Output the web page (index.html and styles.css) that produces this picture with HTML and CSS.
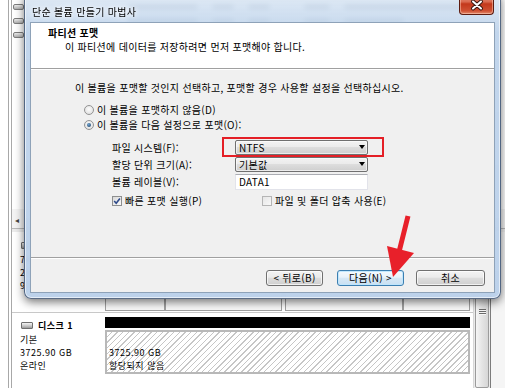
FILE: index.html
```html
<!DOCTYPE html>
<html lang="ko">

<head>
    <meta charset="utf-8">
    <title>단순 볼륨 만들기 마법사</title>
    <link rel="stylesheet" href="styles.css">
</head>

<body>
    <div class="screen">
        <!-- volume list (mostly under the wizard, only seen blurred through the glass) -->
        <div class="volumes">
            <div class="vol-row"><span class="drive"></span><span class="smudge w1"></span><span class="smudge w2"></span><span class="smudge w2"></span><span class="smudge w3"></span><span class="smudge w4"></span></div>
            <div class="vol-row"><span class="drive"></span><span class="smudge w1"></span><span class="smudge w2"></span><span class="smudge w2"></span><span class="smudge w3"></span><span class="smudge w5"></span></div>
            <div class="vol-row"><span class="drive"></span></div>
        </div>
        <div class="hscroll"><span class="scroll-left">◂</span></div>
        <div class="splitter"></div>

        <div class="lower">
            <div class="disks">
                <div class="disk disk0">
                    <div class="disk-info">
                        <div class="disk-name"><span class="hdd"></span></div>
                        <div>74.53 GB</div>
                        <div>232.88 GB</div>
                        <div>931.51 GB</div>
                    </div>
                    <div class="disk-parts">
                        <div class="bar-black"></div>
                        <div class="parts">
                            <div class="part p1"></div>
                            <div class="part p2"></div>
                            <div class="part p3"></div>
                            <div class="part p4"></div>
                        </div>
                    </div>
                </div>
                <div class="disk-gap"></div>
                <div class="disk disk1">
                    <div class="disk-info">
                        <div class="disk-name"><span class="hdd"></span><b>디스크 1</b></div>
                        <div>기본</div>
                        <div>3725.90 GB</div>
                        <div>온라인</div>
                    </div>
                    <div class="disk-parts">
                        <div class="bar-black"></div>
                        <div class="unalloc">
                            <div>3725.90 GB</div>
                            <div>할당되지 않음</div>
                        </div>
                    </div>
                </div>
            </div>
            <div class="vscroll">
                <div class="thumb"><span class="grip"></span></div>
            </div>
            <div class="edge"></div>
        </div>

        <!-- the wizard window -->
        <div class="wizard">
            <div class="titlebar">
                <h1>단순 볼륨 만들기 마법사</h1>
                <div class="close">
                    <svg width="35" height="22" viewBox="0 0 35 22">
                        <path d="M14 9.5 L22 16.5 M22 9.5 L14 16.5" stroke="#3a1710" stroke-width="4" stroke-linecap="round"/>
                        <path d="M14 9.5 L22 16.5 M22 9.5 L14 16.5" stroke="#fff" stroke-width="2" stroke-linecap="round"/>
                    </svg>
                </div>
            </div>
            <div class="client">
                <div class="wiz-head">
                    <h2>파티션 포맷</h2>
                    <p>이 파티션에 데이터를 저장하려면 먼저 포맷해야 합니다.</p>
                </div>
                <div class="wiz-body">
                    <p>이 볼륨을 포맷할 것인지 선택하고, 포맷할 경우 사용할 설정을 선택하십시오.</p>
                    <div class="radios">
                        <div class="radio"><span class="dot"></span>이 볼륨을 포맷하지 않음(D)</div>
                        <div class="radio"><span class="dot checked"></span>이 볼륨을 다음 설정으로 포맷(O):</div>
                    </div>
                    <div class="form">
                        <label>파일 시스템(F):</label>
                        <div class="combo marked">NTFS</div>
                        <label>할당 단위 크기(A):</label>
                        <div class="combo">기본값</div>
                        <label>볼륨 레이블(V):</label>
                        <div class="field">DATA1</div>
                    </div>
                    <div class="checks">
                        <div class="check quick">
                            <span class="box">
                                <svg width="8" height="8" viewBox="0 0 8 8"><path d="M1.2 4 L3.2 6.2 L6.9 1.4" fill="none" stroke="#2f4a8a" stroke-width="1.6"/></svg>
                            </span>빠른 포맷 실행(P)
                        </div>
                        <div class="check"><span class="box off"></span>파일 및 폴더 압축 사용(E)</div>
                    </div>
                </div>
                <div class="wiz-foot">
                    <button class="btn btn-back">&lt; 뒤로(B)</button>
                    <button class="btn btn-next">다음(N) &gt;</button>
                    <button class="btn btn-cancel">취소</button>
                </div>
            </div>
        </div>

        <!-- annotation arrow -->
        <svg class="pointer" width="505" height="388" viewBox="0 0 505 388">
            <line x1="408" y1="216" x2="399" y2="252" stroke="#e8202a" stroke-width="5"/>
            <polygon points="387,246 414,253 393,277" fill="#e8202a"/>
        </svg>
    </div>
</body>

</html>
```

FILE: styles.css
```css
* {
    box-sizing: border-box;
    margin: 0;
    padding: 0;
}

body {
    width: 505px;
    height: 388px;
    overflow: hidden;
    background: #fff;
    font-family: "Noto Sans CJK KR", "Noto Sans", sans-serif;
    font-size: 10px;
    letter-spacing: 0.3px;
    color: #000;
}

.screen {
    position: relative;
    width: 505px;
    height: 388px;
    padding-left: 12px;
    display: flex;
    flex-direction: column;
    background: linear-gradient(to right, #fff 8px, #a8a8a8 8px 9px, #fff 9px 11px, #a8a8a8 11px 12px, #fff 12px);
}

/* background: disk management */

.volumes {
    height: 210px;
}

.vol-row {
    display: flex;
    align-items: center;
    gap: 14px;
    height: 14px;
}

.drive {
    width: 11px;
    height: 6px;
    margin-left: 1px;
    border: 1px solid #7d7d7d;
    border-radius: 2px;
    background: linear-gradient(#eee, #b0b0b0);
}

.smudge {
    height: 4px;
    border-radius: 2px;
    background: #8d96a3;
    filter: blur(1.5px);
}

.smudge.w1 { width: 70px; margin-left: 90px; }
.smudge.w2 { width: 22px; }
.smudge.w3 { width: 26px; margin-left: 20px; }
.smudge.w4 { width: 120px; }
.smudge.w5 { width: 60px; }

.hscroll {
    height: 20px;
    background: #f4f4f4;
    border-bottom: 1px solid #b9b9b9;
    padding-left: 3px;
    font-size: 8px;
    line-height: 21px;
    color: #444;
}

.splitter {
    height: 3px;
    background: #ececec;
}

.lower {
    flex: 1;
    display: flex;
}

.disks {
    width: 461px;
    display: flex;
    flex-direction: column;
}

.disk {
    display: flex;
}

.disk0 {
    height: 80px;
}

.disk-gap {
    height: 3px;
    border-top: 1px solid #c9c9c9;
}

.disk-info {
    width: 93px;
    padding: 7px 0 0 8px;
    font-size: 9px;
    letter-spacing: 0.5px;
    line-height: 13px;
    white-space: nowrap;
}

.disk1 .disk-info {
    padding-top: 4px;
}

.disk-name {
    display: flex;
    align-items: center;
    gap: 5px;
    height: 13px;
    margin-bottom: 1px;
}

.hdd {
    width: 12px;
    height: 7px;
    margin-left: 1px;
    border: 1px solid #6f6f6f;
    border-radius: 1px;
    background: linear-gradient(#f4f4f4, #c4c4c4 60%, #9a9a9a);
}

.disk-parts {
    flex: 1;
    padding: 2px 3px 0 0;
    display: flex;
    flex-direction: column;
}

.bar-black {
    height: 11px;
    background: #000;
}

.parts {
    flex: 1;
    display: flex;
    margin: 2px 0 1px;
}

.part {
    border: 1px solid #a0a0a0;
    border-top: 0 none;
    background: #fafafa;
}

.p1 { width: 60px; }
.p2 { width: 117px; margin-right: 3px; }
.p3 { width: 118px; }
.p4 { flex: 1; }

.unalloc {
    flex: 1;
    margin-top: 2px;
    border: 2px solid #b8b8b8;
    padding: 14px 0 0 2px;
    font-size: 9px;
    letter-spacing: 0.5px;
    line-height: 13px;
    background: repeating-linear-gradient(135deg, #fff 0 3px, #c6c6c6 3px 4px);
}

.vscroll {
    width: 17px;
    background: #ebebeb;
    border-left: 1px solid #d8d8d8;
    padding: 6px 1px 0;
}

.vscroll .thumb {
    height: 150px;
    border: 1px solid #9b9b9b;
    border-radius: 2px;
    background: linear-gradient(to right, #f6f6f6, #e4e4e4 50%, #d6d6d6);
    display: flex;
    justify-content: center;
    padding-top: 70px;
}

.grip {
    width: 7px;
    height: 6px;
    background: repeating-linear-gradient(#6a6a6a 0 1px, #f5f5f5 1px 2px);
}

.edge {
    flex: 1;
    border-left: 1px solid #7c7c7c;
    background: #f5f5f5;
}

/* wizard window */

.wizard {
    position: absolute;
    left: 24px;
    top: -8px;
    width: 477px;
    height: 307px;
    padding: 0 5px 5px;
    border: 1px solid rgba(45, 65, 95, 0.75);
    border-radius: 7px;
    background: linear-gradient(rgba(218, 230, 243, 0.82), rgba(190, 211, 235, 0.94) 40px, rgba(186, 208, 234, 0.96));
    backdrop-filter: blur(2px);
    box-shadow: 0 3px 10px rgba(0, 0, 0, 0.55), inset 0 0 0 1px rgba(255, 255, 255, 0.6);
    display: flex;
    flex-direction: column;
}

.titlebar {
    height: 29px;
    display: flex;
    justify-content: space-between;
}

.titlebar h1 {
    font-size: 10px;
    font-weight: normal;
    line-height: 14px;
    margin-top: 12px;
    padding-left: 2px;
    text-shadow: 0 0 4px #fff, 0 0 6px #fff;
}

.close {
    width: 35px;
    height: 22px;
    margin-right: 1px;
    border: 1px solid #5d1c10;
    border-top: 0 none;
    border-radius: 0 0 4px 4px;
    background: linear-gradient(#e9a996, #d9694e 42%, #c3381b 52%, #cf5133 85%, #e38e70);
    box-shadow: inset 0 0 0 1px rgba(255, 210, 190, 0.5);
    overflow: hidden;
}

.close svg {
    display: block;
    margin: -1px 0 0 -1px;
}

.client {
    flex: 1;
    border: 1px solid #8ea2b8;
    background: #f0f0f0;
    display: flex;
    flex-direction: column;
}

.wiz-head {
    height: 46px;
    padding: 3px 0 0 17px;
    background: #fff;
    border-bottom: 1px solid #a0a0a0;
    line-height: 14px;
}

.wiz-head h2 {
    font-size: 10px;
    font-weight: bold;
}

.wiz-head p {
    padding-left: 17px;
}

.wiz-body {
    flex: 1;
    padding: 11px 0 0 44px;
    border-top: 1px solid #fff;
    line-height: 14px;
}

.radios {
    margin-top: 7px;
}

.radio {
    display: flex;
    align-items: center;
    gap: 3px;
    height: 15px;
    margin-left: 9px;
}

.dot {
    position: relative;
    width: 10px;
    height: 10px;
    border: 1px solid #939393;
    border-radius: 50%;
    background: radial-gradient(circle at 50% 40%, #fdfdfd, #d9d9d9);
}

.dot.checked:after {
    content: " ";
    position: absolute;
    left: 2px;
    top: 2px;
    width: 4px;
    height: 4px;
    border-radius: 50%;
    background: radial-gradient(circle at 40% 35%, #6fa3d0, #17395c);
}

.form {
    display: grid;
    grid-template-columns: 123px 133px;
    grid-template-rows: 15px 15px 16px;
    row-gap: 2px;
    align-items: center;
    margin: 8px 0 0 37px;
}

.combo {
    position: relative;
    height: 15px;
    padding-left: 3px;
    border: 1px solid #707070;
    border-radius: 2px;
    background: linear-gradient(#f3f3f3, #ebebeb 45%, #dddddd 50%, #cfcfcf);
    box-shadow: inset 0 0 0 1px rgba(255, 255, 255, 0.6);
    line-height: 13px;
}

.combo:after {
    content: " ";
    position: absolute;
    right: 2px;
    top: 4px;
    border-left: 3.5px solid transparent;
    border-right: 3.5px solid transparent;
    border-top: 4px solid #000;
}

.combo.marked:before {
    content: " ";
    position: absolute;
    left: -14px;
    top: -4px;
    right: -17px;
    bottom: -3px;
    border: 2px solid #e41f26;
}

.field {
    height: 16px;
    padding-left: 3px;
    border: 1px solid #e2e3ea;
    border-top-color: #abadb3;
    background: #fff;
    line-height: 14px;
}

.checks {
    display: flex;
    align-items: center;
    height: 14px;
    margin: 4px 0 0 37px;
}

.check {
    display: flex;
    align-items: center;
    gap: 3px;
}

.check.quick {
    width: 150px;
}

.box {
    width: 10px;
    height: 10px;
    border: 1px solid #8e8f8f;
    background: linear-gradient(135deg, #d8d8d8, #fbfbfb);
}

.box svg {
    display: block;
}

.box.off {
    border-color: #b5b5b5;
    background: linear-gradient(135deg, #e6e6e6, #f8f8f8);
}

.wiz-foot {
    height: 35px;
    display: flex;
    justify-content: flex-end;
    align-items: flex-start;
    padding: 12px 9px 0 0;
    border-top: 1px solid #a0a0a0;
    box-shadow: inset 0 1px 0 #fff;
}

.btn {
    height: 16px;
    padding: 0;
    border: 1px solid #707070;
    border-radius: 3px;
    background: linear-gradient(#f3f3f3, #ebebeb 45%, #dddddd 50%, #cfcfcf);
    box-shadow: inset 0 0 0 1px rgba(255, 255, 255, 0.7);
    font-family: inherit;
    font-size: 10px;
    letter-spacing: 0.3px;
    line-height: 14px;
    color: #000;
}

.btn-back {
    width: 57px;
}

.btn-next {
    width: 67px;
    margin-left: 14px;
    border-color: #3c7fb1;
    background: linear-gradient(#f5fafd, #e8f2fa 45%, #d6e8f6 50%, #c9e0f2);
    box-shadow: inset 0 0 0 1px rgba(190, 230, 253, 0.9);
}

.btn-cancel {
    width: 69px;
    margin-left: 12px;
}

.pointer {
    position: absolute;
    left: 0;
    top: 0;
    pointer-events: none;
}
```
